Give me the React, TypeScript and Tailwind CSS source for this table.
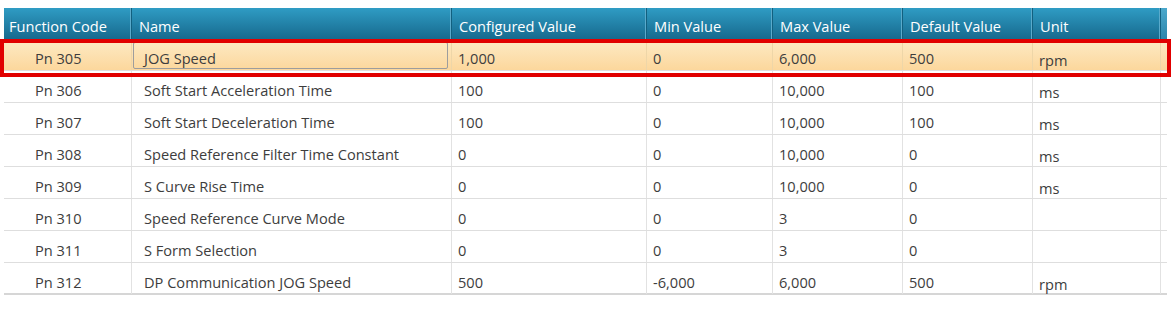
import React from "react";

const cols = "grid grid-cols-[128px_320px_195px_126px_130px_130px_128px_6px]";

const headers = ["Function Code", "Name", "Configured Value", "Min Value", "Max Value", "Default Value", "Unit"];

const rows: string[][] = [
  ["Pn 305", "JOG Speed", "1,000", "0", "6,000", "500", "rpm"],
  ["Pn 306", "Soft Start Acceleration Time", "100", "0", "10,000", "100", "ms"],
  ["Pn 307", "Soft Start Deceleration Time", "100", "0", "10,000", "100", "ms"],
  ["Pn 308", "Speed Reference Filter Time Constant", "0", "0", "10,000", "0", "ms"],
  ["Pn 309", "S Curve Rise Time", "0", "0", "10,000", "0", "ms"],
  ["Pn 310", "Speed Reference Curve Mode", "0", "0", "3", "0", ""],
  ["Pn 311", "S Form Selection", "0", "0", "3", "0", ""],
  ["Pn 312", "DP Communication JOG Speed", "500", "-6,000", "6,000", "500", "rpm"],
];

export default function App() {
  return (
    <div className="relative w-[1175px] h-[317px] bg-white pt-2 pl-1 font-['Open_Sans',sans-serif] text-[14.6px] text-[#3d3d3d]">
      <div className="w-[1163px]">
        {/* Header */}
        <div className={`${cols} h-[31px] bg-gradient-to-b from-[#2f9cc4] to-[#176a8e] text-white`}>
          {headers.map((h, i) => (
            <div
              key={h}
              className={`pt-[8px] leading-5 whitespace-nowrap shadow-[inset_-1px_0_0_#12607f,inset_-2px_0_0_#5aaacb] ${i === 0 ? "pl-[5px]" : "pl-[7px]"}`}
            >
              {h}
            </div>
          ))}
          <div className="bg-gradient-to-b from-[#4aa8cc] to-[#2c86ab]" />
        </div>

        {/* Body */}
        {rows.map((r, ri) => {
          const sel = ri === 0;
          const last = ri === rows.length - 1;
          return (
            <div
              key={r[0]}
              className={`${cols} h-[32px] ${last ? "border-b-2 border-[#d6d6d6]" : "border-b border-[#dedede]"} ${sel ? "bg-gradient-to-b from-[#fdebc6] to-[#fcd79c]" : ""}`}
            >
              {r.map((c, ci) => (
                <div
                  key={ci}
                  className={`relative border-r ${sel ? "border-[#eed6a8]" : "border-[#e2e2e2]"} ${ci === 6 ? "pt-[11px]" : "pt-[9px]"} leading-5 whitespace-nowrap ${ci === 0 ? "pl-[31px]" : ci === 1 ? "pl-[12px]" : "pl-[6px]"}`}
                >
                  {sel && ci === 1 && (
                    <div className="absolute left-[1px] right-[3px] top-[3px] bottom-[1px] border border-[#9d9d9d] rounded-[2px]" />
                  )}
                  {c}
                </div>
              ))}
              <div />
            </div>
          );
        })}
      </div>

      {/* Annotation highlight */}
      <div className="absolute left-0 top-[39px] w-[1171px] h-[38px] border-4 border-[#e10000] pointer-events-none" />
    </div>
  );
}
